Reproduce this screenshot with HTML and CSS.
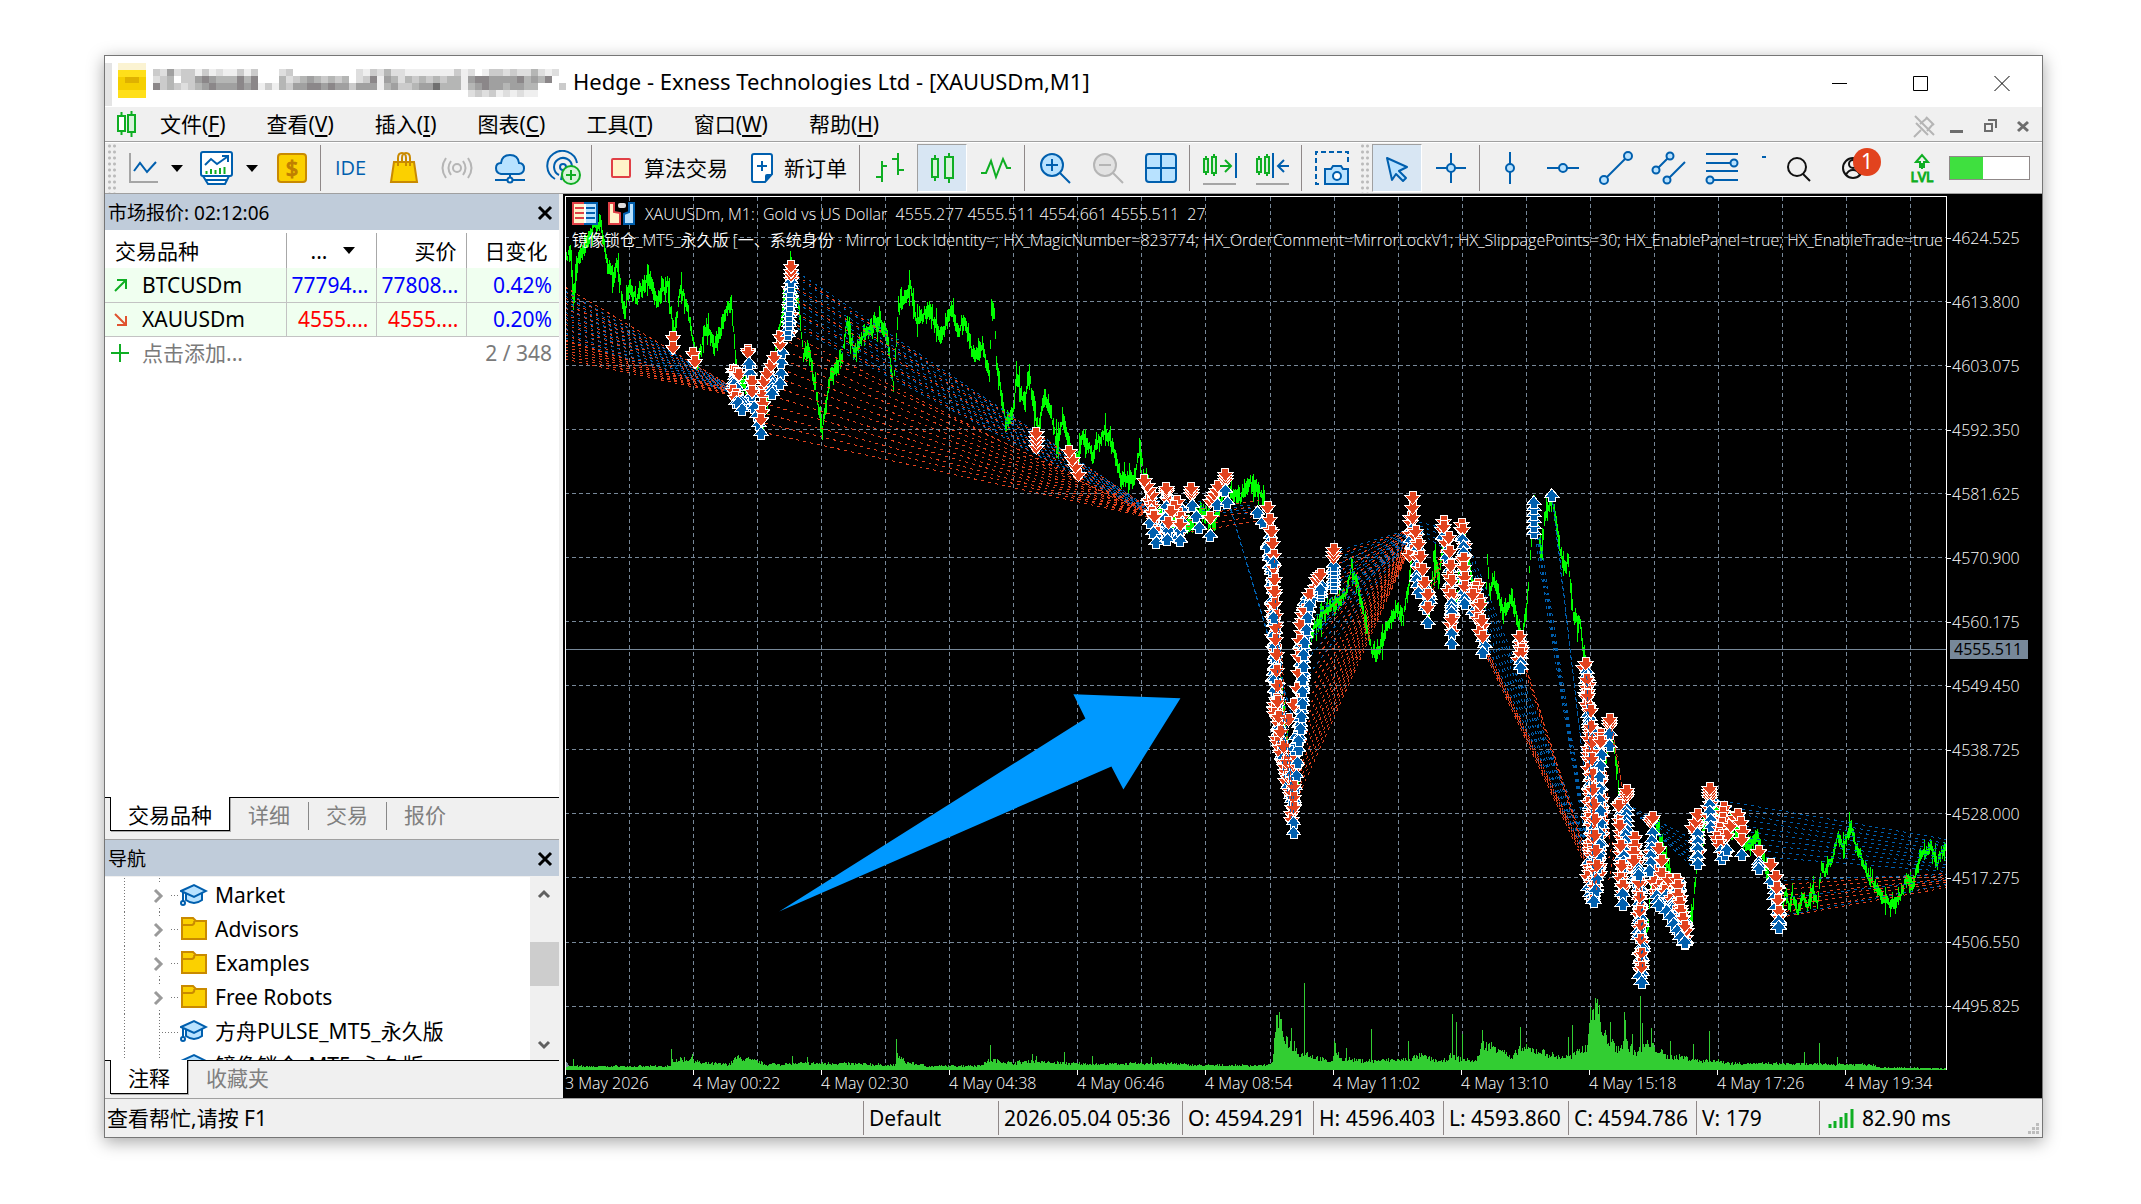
FILE: index.html
```html
<!DOCTYPE html>
<html lang="zh-CN">
<head>
<meta charset="utf-8">
<meta name="viewport" content="width=device-width, initial-scale=1">
<title>Hedge - Exness Technologies Ltd - [XAUUSDm,M1]</title>
<link rel="stylesheet" href="styles.css">
</head>
<body>
<div class="window">
  <header class="titlebar">
    <svg class="title-mask" id="mask" viewBox="0 0 464 50" aria-hidden="true"></svg>
    <h1 class="title">Hedge - Exness Technologies Ltd - [XAUUSDm,M1]</h1>
    <div class="win-controls">
      <button aria-label="最小化"><svg viewBox="0 0 20 20"><path d="M2 10.500H17"/></svg></button>
      <button aria-label="最大化"><svg viewBox="0 0 20 20"><path d="M2.500 3.500H16.500V17.500H2.500Z"/></svg></button>
      <button aria-label="关闭"><svg viewBox="0 0 20 20"><path d="M2.500 3L17.500 18M17.500 3L2.500 18"/></svg></button>
    </div>
  </header>

  <nav class="menubar">
    <svg class="menu-logo" viewBox="0 0 22 26"><g fill="none" stroke="#0fae23" stroke-width="2"><path d="M5.500 1V5M5.500 20V24M15.500 0V4M15.500 21V26"/><path fill="#fff" d="M2 5H9V20H2Z"/><path fill="#d7f3da" d="M12 4H19V21H12Z"/></g></svg>
    <button class="menu">文件(<u>F</u>)</button>
    <button class="menu">查看(<u>V</u>)</button>
    <button class="menu">插入(<u>I</u>)</button>
    <button class="menu">图表(<u>C</u>)</button>
    <button class="menu">工具(<u>T</u>)</button>
    <button class="menu">窗口(<u>W</u>)</button>
    <button class="menu">帮助(<u>H</u>)</button>
    <div class="mdi-controls">
      <button aria-label="取消固定"><svg viewBox="0 0 24 24"><g fill="none" stroke="#b5b5b5" stroke-width="2"><path d="M2 23L9 16M4 9L16 21M14 3L22 11M15 4L8 10M21 10L15 17M3 2L22 21"/></g></svg></button>
      <button aria-label="最小化"><svg viewBox="0 0 24 24"><path fill="#6d6d6d" d="M5 16H18V19H5Z"/></svg></button>
      <button aria-label="还原"><svg viewBox="0 0 24 24"><path fill="none" stroke="#6d6d6d" stroke-width="2" d="M7 10H14V17H7ZM10 6H18V14"/></svg></button>
      <button aria-label="关闭"><svg viewBox="0 0 24 24"><path fill="none" stroke="#6d6d6d" stroke-width="3" d="M7 8L17 17M17 8L7 17"/></svg></button>
    </div>
  </nav>

  <div class="toolbar">
    <span class="grip"></span>
    <button class="tool split" aria-label="线形图"><svg class="ico" viewBox="0 0 36 36"><path d="M4 3V32H32" fill="none" stroke="#a5a5a5" stroke-width="2"/><path d="M8 21L14 13L21 22L30 12" fill="none" stroke="#005fae" stroke-width="2"/></svg><i class="caret"></i></button>
    <button class="tool split" aria-label="指标"><svg class="ico" viewBox="0 0 36 36"><path d="M5 26L10 34H27L31 26" fill="#fff" stroke="#005fae" stroke-width="2"/><path d="M8 30H29" stroke="#005fae" stroke-width="2"/><rect x="3" y="2" width="31" height="24" rx="2" fill="#fff" stroke="#005fae" stroke-width="2"/><path d="M7 15L13 9L19 14L29 7M24 6H30V12" fill="none" stroke="#005fae" stroke-width="2"/><path d="M8.500 24V21M13 24V19M17.500 24V20M22 24V18M26.500 24V17" stroke="#0fae23" stroke-width="2"/></svg><i class="caret"></i></button>
    <button class="tool" aria-label="交易"><svg class="ico" viewBox="0 0 36 36"><rect x="4" y="4" width="28" height="28" rx="3" fill="#fbd000" stroke="#c98a00" stroke-width="2"/><text x="18" y="26" text-anchor="middle" class="dollar">$</text></svg></button>
    <span class="sep"></span>
    <button class="tool ide">IDE</button>
    <button class="tool" aria-label="市场"><svg class="ico" viewBox="0 0 36 36"><path d="M8 12H28L31 32H5Z" fill="#fbd000" stroke="#c98a00" stroke-width="2"/><path d="M12 16V8Q12 3 16 3Q20 3 20 8V16M16 12V8Q16 3 20 3Q24 3 24 8V16" fill="none" stroke="#c98a00" stroke-width="2"/></svg></button>
    <button class="tool" aria-label="信号"><svg class="ico" viewBox="0 0 36 36"><g fill="none" stroke="#b5b5b5" stroke-width="2"><circle cx="18" cy="18" r="4"/><path d="M12 11Q7 18 12 25M24 11Q29 18 24 25M7 8Q0 18 7 28M29 8Q36 18 29 28"/></g></svg></button>
    <button class="tool" aria-label="云主机"><svg class="ico" viewBox="0 0 36 36"><path d="M9 24Q4 23 4 18Q4 13 9 13Q10 5 18 5Q26 5 27 13Q32 13 32 18.500Q32 23 27 24Z" fill="#b8e2ff" stroke="#005fae" stroke-width="2"/><path d="M18 24V29M3 30H15M21 30H33" stroke="#005fae" stroke-width="2"/><circle cx="18" cy="30" r="2.500" fill="#fff" stroke="#005fae" stroke-width="2"/></svg></button>
    <button class="tool" aria-label="社区"><svg class="ico" viewBox="0 0 36 36"><g fill="none" stroke="#005fae" stroke-width="2"><circle cx="18" cy="17" r="3"/><path d="M14 25A9 9 0 1 1 27 16M10 29A15 15 0 1 1 32 13M18 20L16 30"/></g><circle cx="26" cy="25" r="9" fill="#d7f3da" stroke="#0fae23" stroke-width="2"/><path d="M21 25H31M26 20V30" stroke="#0fae23" stroke-width="2"/></svg></button>
    <span class="sep"></span>
    <button class="tool wide algo"><svg class="ico" viewBox="0 0 36 36"><rect x="9" y="9" width="18" height="18" rx="1" fill="#fff3c9" stroke="#e04046" stroke-width="2"/></svg>算法交易</button>
    <button class="tool wide order"><svg class="ico" viewBox="0 0 36 36"><path d="M10 4H26Q28 4 28 6V24L21 32H10Q8 32 8 30V6Q8 4 10 4Z" fill="#fff" stroke="#005fae" stroke-width="2"/><path d="M21 32V26Q21 24 23 24H28Z" fill="#005fae"/><path d="M13 16H23M18 11V21" stroke="#005fae" stroke-width="2"/></svg>新订单</button>
    <span class="sep"></span>
    <button class="tool" aria-label="柱状图"><svg class="ico" viewBox="0 0 36 36"><path d="M10 11V32M4 27H10M10 16H15M26 3V25M20 9H26M26 20H32" fill="none" stroke="#0fae23" stroke-width="2"/></svg></button>
    <button class="tool active" aria-label="蜡烛图"><svg class="ico" viewBox="0 0 36 36"><path d="M11 5V9M11 27V31M25 3V7M25 29V33M8 9H14V27H8ZM21 7H29V28H21Z" fill="#d7f3da" stroke="#0fae23" stroke-width="2"/></svg></button>
    <button class="tool" aria-label="折线图"><svg class="ico" viewBox="0 0 36 36"><path d="M3 23H8L13 11L18 27L25 9L29 18H33" fill="none" stroke="#0fae23" stroke-width="2"/></svg></button>
    <span class="sep"></span>
    <button class="tool" aria-label="放大"><svg class="ico" viewBox="0 0 36 36"><circle cx="15" cy="15" r="11" fill="#b8e2ff" stroke="#005fae" stroke-width="2"/><path d="M9 15H21M15 9V21M23 23L33 33" stroke="#005fae" stroke-width="2"/></svg></button>
    <button class="tool" aria-label="缩小"><svg class="ico" viewBox="0 0 36 36"><circle cx="15" cy="15" r="11" fill="#e2e2e2" stroke="#b5b5b5" stroke-width="2"/><path d="M9 15H21M23 23L33 33" stroke="#b5b5b5" stroke-width="2"/></svg></button>
    <button class="tool" aria-label="平铺"><svg class="ico" viewBox="0 0 36 36"><rect x="3" y="4" width="30" height="28" rx="3" fill="#b8e2ff" stroke="#005fae" stroke-width="2"/><path d="M18 4V32M3 18H33" stroke="#005fae" stroke-width="2"/></svg></button>
    <span class="sep"></span>
    <button class="tool" aria-label="自动滚动"><svg class="ico" viewBox="0 0 36 36"><path d="M4 6V9M4 22V25M12 4V7M12 23V26M2 9H6V22H2ZM10 7H14V23H10Z" fill="#d7f3da" stroke="#0fae23" stroke-width="2"/><path d="M18 16H29M23 10L29 16L23 22" fill="none" stroke="#0fae23" stroke-width="2"/><path d="M34 3V28" stroke="#005fae" stroke-width="2"/><path d="M1 34H34" stroke="#a5a5a5" stroke-width="2"/></svg></button>
    <button class="tool" aria-label="图表平移"><svg class="ico" viewBox="0 0 36 36"><path d="M4 6V9M4 22V25M12 4V7M12 23V26M2 9H6V22H2ZM10 7H14V23H10Z" fill="#d7f3da" stroke="#0fae23" stroke-width="2"/><path d="M18 3V28M23 16H34M29 10L23 16L29 22" fill="none" stroke="#005fae" stroke-width="2"/><path d="M1 34H34" stroke="#a5a5a5" stroke-width="2"/></svg></button>
    <span class="sep"></span>
    <button class="tool" aria-label="截图"><svg class="ico" viewBox="0 0 36 36"><path d="M34 12V2H2V34H8" fill="none" stroke="#005fae" stroke-width="2" stroke-dasharray="5 3"/><path d="M12 19H17L19 16H27L29 19H34V34H11V19Z" fill="#b8e2ff" stroke="#005fae" stroke-width="2"/><circle cx="23" cy="26" r="4" fill="#fff" stroke="#005fae" stroke-width="2"/></svg></button>
    <span class="grip"></span>
    <button class="tool active" aria-label="光标"><svg class="ico" viewBox="0 0 36 36"><path d="M8 8L28 17L20 21L27 28L24 31L17 24L13 30Z" fill="#b8e2ff" stroke="#005fae" stroke-width="2" stroke-linejoin="round"/></svg></button>
    <button class="tool" aria-label="十字线"><svg class="ico" viewBox="0 0 36 36"><path d="M18 3V33M3 18H33" stroke="#005fae" stroke-width="2"/><circle cx="18" cy="18" r="4" fill="#b8e2ff" stroke="#005fae" stroke-width="2"/></svg></button>
    <span class="sep"></span>
    <button class="tool" aria-label="垂直线"><svg class="ico" viewBox="0 0 36 36"><path d="M18 2V34" stroke="#005fae" stroke-width="2"/><circle cx="18" cy="18" r="4" fill="#b8e2ff" stroke="#005fae" stroke-width="2"/></svg></button>
    <button class="tool" aria-label="水平线"><svg class="ico" viewBox="0 0 36 36"><path d="M2 18H34" stroke="#005fae" stroke-width="2"/><circle cx="18" cy="18" r="4" fill="#b8e2ff" stroke="#005fae" stroke-width="2"/></svg></button>
    <button class="tool" aria-label="趋势线"><svg class="ico" viewBox="0 0 36 36"><path d="M6 30L30 6" stroke="#005fae" stroke-width="2"/><g fill="#b8e2ff" stroke="#005fae" stroke-width="2"><circle cx="6" cy="30" r="4"/><circle cx="30" cy="6" r="4"/></g></svg></button>
    <button class="tool" aria-label="通道"><svg class="ico" viewBox="0 0 36 36"><path d="M5 20L19 6M16 30L34 12" stroke="#005fae" stroke-width="2"/><g fill="#b8e2ff" stroke="#005fae" stroke-width="2"><circle cx="5" cy="20" r="3.500"/><circle cx="19" cy="6" r="3.500"/><circle cx="16" cy="30" r="3.500"/></g></svg></button>
    <button class="tool" aria-label="斐波那契"><svg class="ico" viewBox="0 0 36 36"><path d="M2 4H34M2 13H34M2 21H34M2 30H34" stroke="#005fae" stroke-width="2"/><g fill="#b8e2ff" stroke="#005fae" stroke-width="2"><circle cx="30" cy="13" r="3.500"/><circle cx="6" cy="30" r="3.500"/></g></svg></button>
    <span class="more"></span>
    <button class="tool push" aria-label="搜索"><svg class="ico" viewBox="0 0 36 36"><circle cx="17" cy="17" r="9" fill="none" stroke="#111" stroke-width="2"/><path d="M23 24L30 31" stroke="#111" stroke-width="2"/></svg></button>
    <button class="tool user" aria-label="账户"><svg class="ico" viewBox="0 0 36 36"><g fill="none" stroke="#111" stroke-width="2"><circle cx="20" cy="18" r="10"/><circle cx="20" cy="14" r="4"/><path d="M13 25Q15 20 20 20Q25 20 27 25"/></g></svg><b class="badge">1</b></button>
    <button class="tool lvl" aria-label="LVL"><svg class="ico" viewBox="0 0 36 36"><path d="M18 19V13M12 12L18 5L24 12H20V17H16V12Z" fill="none" stroke="#0fae23" stroke-width="2"/><text x="18" y="32" text-anchor="middle" class="lvl-text">LVL</text></svg></button>
    <span class="meter"><i></i></span>
  </div>

  <main class="work">
    <aside class="side">
      <section class="panel market">
        <h2 class="panel-head">市场报价: 02:12:06<button class="close" aria-label="关闭"><svg viewBox="0 0 16 16"><path d="M2 2L14 14M14 2L2 14"/></svg></button></h2>
        <table class="quotes">
          <colgroup><col class="c-sym"><col class="c-num"><col class="c-num"><col class="c-chg"></colgroup>
          <thead><tr><th>交易品种</th><th class="sorted">...<i class="caret"></i></th><th class="r">买价</th><th class="mid">日变化</th></tr></thead>
          <tbody>
            <tr><td><span class="sym"><svg viewBox="0 0 16 16"><path d="M2 14L13 3M4 3H13V12" stroke="#0fae23"/></svg>BTCUSDm</span></td><td class="r up">77794...</td><td class="r up">77808...</td><td class="r up">0.42%</td></tr>
            <tr><td><span class="sym"><svg viewBox="0 0 16 16"><path d="M2 3L13 14M13 5V14H4" stroke="#e0532f"/></svg>XAUUSDm</span></td><td class="r down">4555....</td><td class="r down">4555....</td><td class="r up">0.20%</td></tr>
          </tbody>
          <tfoot><tr><td colspan="2"><span class="sym add"><svg viewBox="0 0 18 18"><path d="M0 9H18M9 0V18" stroke="#0fae23"/></svg>点击添加...</span></td><td colspan="2" class="r count">2 / 348</td></tr></tfoot>
        </table>
        <div class="tabs"><button class="tab on">交易品种</button><button class="tab">详细</button><button class="tab">交易</button><button class="tab">报价</button></div>
      </section>
      <section class="panel navigator">
        <h2 class="panel-head">导航<button class="close" aria-label="关闭"><svg viewBox="0 0 16 16"><path d="M2 2L14 14M14 2L2 14"/></svg></button></h2>
        <div class="tree-box">
          <ul class="tree">
            <li class="node"><svg class="twig" viewBox="0 0 64 34"><use href="#branch"/></svg><svg class="leaf" viewBox="0 0 28 26"><use href="#cap"/></svg>Market</li>
            <li class="node"><svg class="twig" viewBox="0 0 64 34"><use href="#branch"/></svg><svg class="leaf" viewBox="0 0 28 26"><use href="#folder"/></svg>Advisors</li>
            <li class="node"><svg class="twig" viewBox="0 0 64 34"><use href="#branch"/></svg><svg class="leaf" viewBox="0 0 28 26"><use href="#folder"/></svg>Examples</li>
            <li class="node"><svg class="twig" viewBox="0 0 64 34"><use href="#branch"/></svg><svg class="leaf" viewBox="0 0 28 26"><use href="#folder"/></svg>Free Robots</li>
            <li class="node"><svg class="twig" viewBox="0 0 64 34"><use href="#stem"/></svg><svg class="leaf" viewBox="0 0 28 26"><use href="#cap"/></svg>方舟PULSE_MT5_永久版</li>
            <li class="node"><svg class="twig" viewBox="0 0 64 34"><use href="#stem"/></svg><svg class="leaf" viewBox="0 0 28 26"><use href="#cap"/></svg>镜像锁仓_MT5_永久版</li>
          </ul>
          <div class="scroll"><svg viewBox="0 0 28 32"><path d="M9 20L14 15L19 20"/></svg><i class="thumb"></i><svg class="end" viewBox="0 0 28 32"><path d="M9 14L14 19L19 14"/></svg></div>
        </div>
        <div class="tabs"><button class="tab on">注释</button><button class="tab">收藏夹</button></div>
      </section>
    </aside>

    <section class="chart">
      <div class="plot">
        <svg class="canvas" id="canvas" viewBox="563 194 1383 876" preserveAspectRatio="xMinYMin slice" role="img" aria-label="XAUUSDm M1"></svg>
        <div class="legend">
          <p class="legend-row">
            <svg viewBox="0 0 64 24"><path d="M1 1H13V22H1Z" fill="#fff3c9" stroke="#e04046" stroke-width="2"/><path d="M13 1H25V22H13Z" fill="#b8e2ff" stroke="#005fae" stroke-width="2"/><path d="M3 6H12M3 11H12M3 16H12" stroke="#e04046" stroke-width="2"/><path d="M14 6H23M14 11H23M14 16H23" stroke="#005fae" stroke-width="2"/><path d="M13 2V21" stroke="#fff" stroke-width="2"/><path d="M37 1H42V10L48 11V22H37Z" fill="#fff3c9" stroke="#e04046" stroke-width="2"/><path d="M62 1H57V10L52 12V22H62Z" fill="#b8e2ff" stroke="#005fae" stroke-width="2"/><rect x="46" y="1" width="8" height="5" rx="2" fill="#ddd"/></svg>
            <span>XAUUSDm, M1:&nbsp; Gold vs US Dollar&nbsp; 4555.277 4555.511 4554.661 4555.511&nbsp; 27</span>
          </p>
          <p class="legend-row params">镜像锁仓_MT5_永久版 [一、系统身份 · Mirror Lock Identity=; HX_MagicNumber=823774; HX_OrderComment=MirrorLockV1; HX_SlippagePoints=30; HX_EnablePanel=true; HX_EnableTrade=true</p>
        </div>
      </div>
      <div class="prices">
        <span>4624.525</span><span>4613.800</span><span>4603.075</span><span>4592.350</span><span>4581.625</span><span>4570.900</span><span>4560.175</span><span>4549.450</span><span>4538.725</span><span>4528.000</span><span>4517.275</span><span>4506.550</span><span>4495.825</span>
        <b class="last">4555.511</b>
      </div>
      <div class="times">
        <span>3 May 2026</span><span>4 May 00:22</span><span>4 May 02:30</span><span>4 May 04:38</span><span>4 May 06:46</span><span>4 May 08:54</span><span>4 May 11:02</span><span>4 May 13:10</span><span>4 May 15:18</span><span>4 May 17:26</span><span>4 May 19:34</span>
      </div>
    </section>
  </main>

  <footer class="status">
    <span>查看帮忙,请按 F1</span><span>Default</span><span>2026.05.04 05:36</span><span>O: 4594.291</span><span>H: 4596.403</span><span>L: 4593.860</span><span>C: 4594.786</span><span>V: 179</span>
    <span class="ping"><svg viewBox="0 0 26 20"><path d="M2 20V16M7 20V13M13 20V9M18 20V5M24 20V1" stroke="#0fae23" stroke-width="3"/></svg>82.90 ms</span>
    <svg class="size-grip" viewBox="0 0 12 12"><path fill="#bdbdbd" d="M8 0H11V3H8ZM4 4H7V7H4ZM8 4H11V7H8ZM0 8H3V11H0ZM4 8H7V11H4ZM8 8H11V11H8Z"/></svg>
  </footer>
</div>

<svg class="defs" aria-hidden="true">
  <g id="branch"><path d="M19.500 0V34M54.500 0V6M54.500 30V34M66 17.500H74" fill="none" stroke="#777" stroke-dasharray="1 2"/><path d="M50 12L56 18L50 24" fill="none" stroke="#9a9a9a" stroke-width="3"/></g>
  <g id="stem"><path d="M19.500 0V34M54.500 0V34M54 18.500H74" fill="none" stroke="#777" stroke-dasharray="1 2"/></g>
  <g id="cap" stroke="#005fae" stroke-width="2"><path d="M6 11V18Q14 24 22 18V11" fill="#b8e2ff"/><path d="M1 9L14 3L26 9L14 15Z" fill="#b8e2ff"/><path d="M3 10V19"/><circle cx="3" cy="21" r="2" fill="#fff"/></g>
  <g id="folder" fill="#fbd000" stroke="#c98a00" stroke-width="2"><path d="M2 2H13L16 5H26V23H2Z"/><path d="M2 9H12Q15 8 14 5"/></g>
</svg>
<script src="chart.js"></script>
</body>
</html>
```
FILE: styles.css
```css
* { box-sizing: border-box; margin: 0; padding: 0; }
body {
  background: #fff; color: #000; padding: 55px 98px 66px 104px;
  font: 21px/26px "Noto Sans", "Noto Sans CJK SC", sans-serif;
}
button { border: 0; background: none; font: inherit; color: inherit; }
.defs { position: absolute; width: 0; height: 0; }

.window {
  display: flex; flex-direction: column; min-height: calc(100vh - 121px);
  border: 1px solid #767676; background: #f0f0f0;
  box-shadow: 0 4px 16px rgba(0, 0, 0, .35);
}

.titlebar { display: flex; align-items: center; height: 51px; padding-bottom: 1px; background: #fff; }
.title-mask { width: 464px; height: 50px; flex: none; }
.title { flex: 1; padding-left: 4px; font-size: 22px; font-weight: 400; white-space: nowrap; }
.win-controls { display: flex; }
.win-controls button { width: 81px; height: 50px; }
.win-controls svg { width: 20px; height: 20px; fill: none; stroke: #000; vertical-align: middle; }

.menubar { display: flex; align-items: center; height: 35px; border-bottom: 1px solid #a0a0a0; padding-left: 11px; }
.menu-logo { width: 22px; height: 26px; margin-right: 22px; }
.menu { margin-right: 41px; white-space: nowrap; }
.menu u { text-underline-offset: 3px; }
.mdi-controls { display: flex; margin-left: auto; padding-right: 3px; }
.mdi-controls button { width: 33px; height: 32px; }
.mdi-controls svg { width: 24px; height: 24px; vertical-align: middle; }

.toolbar { display: flex; align-items: center; height: 52px; padding-right: 12px; border-top: 1px solid #fff; border-bottom: 1px solid #a0a0a0; }
.tool { position: relative; display: flex; align-items: center; justify-content: center; width: 53px; height: 48px; flex: none; }
.tool.active { background: #d8e6f3; border: 1px solid; border-color: #a0a0a0 #fff #fff #a0a0a0; width: 50px; margin: 0 2px 0 1px; }
.tool.split { width: 72px; justify-content: flex-start; padding-left: 8px; gap: 9px; }
.tool.split + .split { width: 75px; gap: 12px; }
.tool.algo { width: 139px; justify-content: flex-start; padding-left: 8px; gap: 5px; }
.tool.order { width: 123px; justify-content: flex-start; padding-left: 10px; gap: 4px; }
.ico { width: 36px; height: 36px; flex: none; }
.tool.ide { color: #005fae; font-family: "Open Sans", "Noto Sans", sans-serif; font-size: 20px; }
.dollar { font: 22px "Noto Sans", sans-serif; fill: #c07f00; stroke: #c07f00; }
.lvl-text { font: 14px "Noto Sans", sans-serif; fill: #0fae23; stroke: #0fae23; }
.caret { border: 6px solid transparent; border-top: 7px solid #000; border-bottom: 0; }
.sep { width: 1px; height: 46px; margin: 0 3px 0 2px; background: #8f8888; flex: none; }
.grip { width: 9px; height: 50px; margin: 0 2px; flex: none; background: radial-gradient(circle, #bbb 1px, transparent 2px) 0 0 / 5px 6px; }
.more { width: 4px; height: 2px; margin: 0 0 22px 14px; background: #005fae; }
.push { margin-left: auto; }
.user { margin-right: 18px; }
.badge { position: absolute; left: 29px; top: 4px; width: 28px; height: 28px; border-radius: 14px; background: #e2431e; color: #fff; font-weight: 400; line-height: 27px; text-align: center; }
.meter { width: 81px; height: 24px; margin-left: 1px; border: 1px solid #8f8888; background: #fff; }
.meter i { display: block; width: 42%; height: 100%; background: #3fe03f; }

.work { display: grid; grid-template-columns: 454px minmax(0, 1fr); column-gap: 4px; flex: 1; min-height: 0; }
.side { display: flex; flex-direction: column; min-height: 0; }
.market { display: flex; flex-direction: column; flex: 1; background: #fff; }
.panel-head { display: flex; align-items: center; justify-content: space-between; height: 36px; padding: 2px 6px 0 3px; background: #c0ccda; font-size: 19px; font-weight: 400; }
.close svg { width: 16px; height: 16px; fill: none; stroke: #000; stroke-width: 3; display: block; }

.quotes { width: 100%; margin-top: 3px; table-layout: fixed; border-collapse: collapse; background: #fff; }
.c-sym { width: 181px; } .c-num { width: 90px; } .c-chg { width: 93px; }
.quotes th { height: 35px; padding-left: 10px; font-weight: 400; text-align: left; }
.quotes th + th { border-left: 1px solid #a8a8a8; }
.quotes td { height: 34px; }
.quotes tbody td { background: #f0fff0; border-bottom: 1px solid #c3c3c3; }
.quotes tbody td + td { border-left: 1px solid #c3c3c3; }
.quotes .sorted { padding-left: 24px; }
.sorted .caret { display: inline-block; margin: 0 0 5px 16px; }
.quotes .r { text-align: right; padding-right: 7px; }
.quotes th.r { padding-right: 9px; }
.quotes th.mid { padding: 0 0 0 18px; }
.up { color: #00f; } .down { color: #f00; }
.sym { display: flex; align-items: center; gap: 13px; padding-left: 8px; }
.sym svg { width: 16px; height: 16px; fill: none; stroke-width: 2; }
.sym.add { gap: 13px; padding-left: 6px; color: #7a7a7a; }
.sym.add svg { width: 18px; height: 18px; }
.quotes .count { color: #7a7a7a; }
.market .tabs { margin-top: auto; height: 42px; }

.tabs { display: flex; align-items: flex-start; padding-left: 5px; border-top: 1px solid #000; background: #f0f0f0; height: 38px; color: #808080; }
.tab { position: relative; height: 32px; padding: 2px 18px 0; line-height: 30px; }
.tab.on { margin-top: -1px; height: 34px; padding: 3px 17px 0; color: #000; background: #fff; border: 1px solid #000; border-top: 0; box-shadow: 1px 1px 0 #aaa; }
.tab:not(.on) + .tab { background: linear-gradient(#888, #888) 0 4px / 1px 28px no-repeat; }

.navigator .panel-head { border-top: 1px solid #a0a0a0; height: 37px; }
.tree-box { display: flex; height: 183px; margin-top: 1px; background: #fff; overflow: hidden; }
.tree { flex: 1; padding-top: 1px; list-style: none; }
.node { display: flex; align-items: center; height: 34px; white-space: nowrap; }
.twig { width: 64px; height: 34px; overflow: visible; margin-right: 11px; }
.leaf { width: 28px; height: 26px; margin-right: 7px; }
.scroll { display: flex; flex-direction: column; width: 29px; background: #f0f0f0; }
.scroll svg { width: 28px; height: 32px; fill: none; stroke: #606060; stroke-width: 3; }
.scroll .end { margin-top: auto; }
.thumb { height: 44px; margin-top: 33px; background: #cdcdcd; }

.chart { display: grid; grid-template: minmax(0, 1fr) 28px / minmax(0, 1fr) 95px; background: #000; color: #fff; font-family: "Open Sans", "Noto Sans", "Noto Sans CJK SC", sans-serif; font-size: 16px; font-weight: 350; line-height: 24px; }
.plot { position: relative; overflow: hidden; }
.canvas { position: absolute; inset: 0; width: 100%; height: 100%; }
.legend { position: absolute; inset: 7px 0 auto 9px; }
.legend-row { display: flex; align-items: center; gap: 9px; height: 26px; white-space: nowrap; overflow: hidden; }
.legend-row svg { width: 64px; height: 24px; flex: none; }
.prices { position: relative; padding-top: 12px; }
.prices span { display: flex; align-items: center; height: 64px; gap: 1px; }
.prices span::before { content: ""; width: 4px; height: 1px; background: #fff; }
.prices .last { position: absolute; left: 3px; top: 446px; width: 78px; height: 19px; padding-left: 4px; line-height: 19px; background: #778899; color: #000; font-weight: 400; }
.times { grid-column: 1 / -1; display: grid; grid-template-columns: repeat(11, 128px); padding-left: 2px; overflow: hidden; }
.times span { background: linear-gradient(#fff, #fff) 0 0 / 1px 5px no-repeat; padding-top: 1px; white-space: nowrap; }

.status { position: relative; display: grid; grid-template-columns: minmax(0, 1fr) 135px 184px 131px 130px 125px 128px 123px 223px; align-items: center; height: 39px; border-top: 1px solid #a0a0a0; white-space: nowrap; }
.status span { height: 34px; line-height: 34px; padding-left: 5px; border-left: 1px solid #8f8888; }
.status span:first-child { border: 0; padding-left: 2px; }
.status .ping { display: flex; align-items: center; gap: 8px; padding-left: 8px; }
.ping svg { width: 26px; height: 20px; }
.size-grip { position: absolute; right: 2px; bottom: 2px; width: 12px; height: 12px; }
```
FILE: chart.js
```js
const RED = '#e2431e', BLUE = '#005fae';
let seed = 7;
const rnd = () => (seed = (seed * 16807) % 2147483647) / 2147483647;

function at(points, t) {
  let total = 0;
  const len = [];
  for (let i = 1; i < points.length; i++) {
    const l = Math.hypot(points[i][0] - points[i - 1][0], points[i][1] - points[i - 1][1]);
    len.push(l); total += l;
  }
  let d = t * total;
  for (let i = 0; i < len.length; i++) {
    if (d <= len[i] || i === len.length - 1) {
      const k = len[i] ? d / len[i] : 0;
      return [points[i][0] + (points[i + 1][0] - points[i][0]) * k, points[i][1] + (points[i + 1][1] - points[i][1]) * k];
    }
    d -= len[i];
  }
  return points[0];
}
const parse = s => s.trim().split(/\s+/).map(p => p.split(',').map(Number));
function valueAt(points, x) {
  for (let i = 1; i < points.length; i++) {
    if (x <= points[i][0]) {
      const [a, b] = [points[i - 1], points[i]];
      return a[1] + (b[1] - a[1]) * (x - a[0]) / (b[0] - a[0]);
    }
  }
  return points[points.length - 1][1];
}

// Grid
let out = '<defs><path id="dn" d="M-3.500 -6.500H3.500V-2.500H7.500L0 6.500L-7.500 -2.500H-3.500Z" fill="' + RED + '" stroke="#fff"/>' +
  '<path id="upw" d="M-3.500 6.500H3.500V2.500H7.500L0 -6.500L-7.500 2.500H-3.500Z" fill="' + BLUE + '" stroke="#fff"/></defs>';
let grid = '';
for (let y = 237.5; y < 1069; y += 64) grid += `M565 ${y}H1946`;
for (let x = 629.5; x < 1946; x += 64) grid += `M${x} 197V1069`;
out += `<path d="${grid}" stroke="#778899" stroke-dasharray="4 3" fill="none"/>`;

// Volume
const volume = parse(`566,3 575,3 660,3 670,3 671,9 692,10 700,6 730,5 735,11 755,8 765,5 830,6 895,4 897,14 905,7 930,3 980,4 990,9 1000,8
  1010,6 1030,8 1060,6 1100,5 1160,6 1200,4 1268,4 1272,12 1275,52 1283,32 1290,22 1300,14 1304,16 1312,12 1325,8 1331,8 1333,22 1340,10 1365,8
  1390,9 1405,9 1420,13 1440,7 1450,13 1458,10 1475,8 1481,24 1500,20 1510,9 1518,20 1540,17 1555,12 1570,12 1585,22 1590,55 1596,66 1600,36
  1615,20 1625,25 1635,15 1645,24 1655,20 1665,12 1680,12 1700,8 1710,9 1730,6 1800,5 1870,5 1880,2 1946,1`);
const spikes = parse(`573,11 671,21 692,16 738,15 748,13 792,14 807,13 896,31 990,25 1032,16 1036,14 1064,18 1092,14 1151,13 1275,55 1290,42 1293,29
  1303,87 1345,22 1370,41 1407,29 1451,56 1455,48 1461,36 1481,40 1519,43 1567,33 1571,45 1587,36 1594,72 1596,71 1609,48 1623,58 1624,50 1631,36
  1639,74 1641,47 1650,42 1669,29 1692,26 1708,39 1803,18 1818,27 1836,13`);
let vol = '';
for (let x = 566; x < 1946; x++) {
  const spike = spikes.find(s => s[0] === x);
  const h = spike ? spike[1] : valueAt(volume, x) * (0.8 + rnd() * 0.5) + rnd();
  vol += `M${x + 0.5} 1069V${Math.round(1069 - h)}`;
}
out += `<path d="M565 1060L573 1069H565Z" fill="#778899"/><path d="${vol}" stroke="#32cd32"/>`;

// Price
const price = parse(`566,257 570,253 573,300 578,260 589,237 593,222 601,227 605,257 613,280 617,263 624,313 629,287 636,298 648,277 656,300
  667,285 674,337 680,287 687,307 697,363 706,327 715,347 721,323 731,303 736,370 762,423 791,263 799,313 803,357 807,347 813,377 822,432 829,380
  842,357 846,323 854,353 864,333 880,320 887,337 893,387 898,307 905,300 910,285 916,323 929,310 940,337 950,310 958,330 964,323 974,357 982,347
  989,373 991,310 994,310 996,363 1005,423 1013,410 1016,377 1023,400 1029,377 1038,433 1044,397 1050,410 1057,447 1062,417 1074,467 1082,437
  1093,453 1105,430 1113,450 1121,480 1133,480 1139,447 1144,477 1153,513 1187,527 1203,510 1213,523 1225,487 1240,497 1250,480 1263,500 1270,540
  1275,623 1293,827 1300,723 1307,640 1317,620 1327,607 1338,600 1345,590 1350,567 1357,590 1363,617 1371,653 1378,650 1383,630 1395,610 1402,617
  1407,587 1412,540 1413,523 1428,617 1432,560 1438,577 1443,527 1452,637 1462,527 1482,647 1486,563 1488,590 1493,580 1502,613 1511,597 1515,620
  1520,637 1525,613 1528,573 1533,497 1540,553 1543,517 1551,500 1555,527 1562,570 1567,563 1572,613 1578,623 1584,661 1592,870 1609,722 1616,772
  1623,880 1626,797 1641,975 1647,919 1653,819 1684,930 1691,911 1695,869 1709,794 1724,833 1735,826 1747,847 1755,836 1760,851 1778,919 1784,894
  1788,904 1791,894 1796,911 1802,894 1806,904 1812,890 1816,904 1820,865 1823,872 1831,858 1836,836 1841,847 1845,840 1849,822 1854,844 1861,861
  1868,879 1875,888 1882,897 1891,904 1898,897 1905,879 1912,883 1919,854 1924,854 1930,844 1936,865 1940,851 1946,849`);
let bars = '';
for (let x = 566; x < 1946; x++) {
  const a = x < 1760 ? 12 : 8;
  const y = valueAt(price, x) + (rnd() - 0.5) * a * 0.5;
  const r = rnd() < 0.15 ? 1.6 : 0.7;
  bars += `M${x + 0.5} ${Math.round(y - 2 - rnd() * a * r)}V${Math.round(y + 2 + rnd() * a * r)}`;
}
out += `<path d="${bars}" stroke="#0f0"/><path d="M565 649.500H1946" stroke="#778899"/>`;

// Trade links: colour, start line, end line, count
const fans = [
  [RED, '565,287 565,340', '736,389 736,393', 11], [BLUE, '565,291 565,338', '736,390 736,394', 10], [RED, '565,341 565,359', '736,392 736,396', 7],
  [BLUE, '791,268 791,325', '1152,510 1152,516', 10], [RED, '791,272 791,335', '1152,510 1152,517', 6], [RED, '789,342 762,432', '1152,512 1152,518', 11],
  [BLUE, '1333,552 1310,640', '1413,528 1413,534', 12], [RED, '1333,556 1296,800', '1414,528 1414,538', 26], [BLUE, '1310,600 1304,680', '1412,532 1412,534', 5],
  [BLUE, '1464,535 1482,645', '1590,850 1592,872', 9], [RED, '1482,640 1484,652', '1588,862 1590,876', 5], [RED, '1520,650 1521,660', '1594,880 1594,884', 3],
  [BLUE, '1533,530 1538,530', '1588,860 1592,870', 4], [BLUE, '1551,495 1552,497', '1592,840 1592,844', 2], [BLUE, '1225,490 1226,495', '1293,720 1293,722', 2],
  [BLUE, '1412,520 1415,530', '1450,530 1462,560', 4], [RED, '1427,600 1427,610', '1443,540 1446,545', 3],
  [BLUE, '1156,497 1160,507', '1262,507 1264,515', 4], [RED, '1152,515 1170,535', '1262,500 1262,520', 5],
  [BLUE, '1709,798 1758,856', '1946,839 1946,871', 10], [RED, '1770,885 1779,917', '1946,873 1946,887', 7], [BLUE, '1776,880 1778,916', '1946,874 1946,884', 3],
  [BLUE, '1626,804 1652,830', '1694,840 1696,870', 7], [RED, '1606,750 1608,880', '1594,890 1624,800', 7]
];
const link = f => {
  const [c, s, e, n] = f;
  const a = parse(s), b = parse(e);
  let d = '';
  for (let i = 0; i < n; i++) {
    const p = at(a, i / (n - 1)), q = at(b, i / (n - 1));
    d += `M${p.map(Math.round)}L${q.map(Math.round)}`;
  }
  return `<path d="${d}" stroke="${c}" fill="none" stroke-dasharray="3 4"/>`;
};
out += fans.map(link).join('');

// Trade arrows: u = buy, d = sell, m = both
const arrows = [
  ['d', 2, '673,338 673,348'], ['d', 2, '693,354 695,362'],
  ['m', 10, '734,370 736,402'], ['u', 5, '748,400 738,402'], ['d', 4, '733,371 739,375'], ['u', 5, '749,366 752,395'], ['u', 2, '742,409 754,407'], ['d', 2, '748,351 748,353'],
  ['u', 1, '749,363 749,363'], ['d', 2, '752,382 752,392'], ['u', 3, '757,415 761,433'], ['d', 5, '764,388 761,420'],
  ['u', 4, '772,380 772,393'], ['u', 4, '780,383 782,352'], ['d', 4, '764,382 774,358'], ['u', 1, '772,393 772,393'], ['u', 1, '780,383 780,383'],
  ['m', 7, '789,333 791,280'], ['d', 2, '780,345 780,337'], ['u', 12, '788,334 791,281'], ['d', 3, '791,276 791,267'],
  ['d', 4, '1036,448 1036,434'], ['d', 4, '1078,475 1069,452'],
  ['m', 14, '1150,498 1158,536'], ['m', 8, '1166,495 1168,535'], ['m', 8, '1180,510 1180,537'], ['u', 3, '1150,522 1156,542'], ['u', 2, '1168,530 1167,539'], ['u', 2, '1180,530 1180,540'],
  ['d', 4, '1152,495 1144,481'], ['d', 3, '1166,493 1166,489'], ['d', 3, '1177,502 1171,512'], ['d', 2, '1168,523 1180,525'], ['d', 2, '1154,517 1154,517'],
  ['d', 3, '1191,495 1191,489'], ['u', 3, '1192,505 1199,527'], ['d', 1, '1210,518 1210,518'], ['u', 1, '1210,535 1210,535'], ['d', 5, '1210,502 1218,487'],
  ['u', 1, '1217,504 1217,504'], ['d', 3, '1225,481 1225,475'], ['u', 2, '1225,490 1227,502'], ['u', 1, '1257,512 1257,512'], ['u', 2, '1262,522 1267,545'],
  ['m', 50, '1268,530 1273,600 1274,690 1280,750 1291,790 1293,820'], ['u', 14, '1267,547 1273,580 1274,690'], ['m', 22, '1275,700 1278,745 1291,800'], ['d', 12, '1267,508 1272,539 1274,590 1275,640'],
  ['d', 12, '1275,640 1278,720 1288,775 1293,808'], ['u', 2, '1273,562 1273,617'],
  ['m', 34, '1292,780 1300,700 1303,610 1310,590 1320,585'], ['u', 18, '1294,800 1301,717 1304,640 1309,600 1320,589'], ['d', 10, '1288,720 1297,690 1300,620 1307,600 1316,580'], ['u', 12, '1298,740 1301,717 1304,640 1309,605'], ['d', 2, '1318,577 1320,575'],
  ['u', 7, '1333,587 1333,565'], ['d', 3, '1333,558 1333,550'], ['u', 3, '1320,595 1320,589'], ['d', 3, '1293,787 1293,808'], ['u', 2, '1293,822 1293,832'],
  ['m', 8, '1411,518 1410,556'], ['d', 3, '1412,518 1412,498'], ['m', 12, '1415,532 1418,590'], ['m', 6, '1427,590 1427,608'], ['u', 2, '1418,592 1427,622'], ['d', 7, '1415,532 1419,552 1423,577 1427,593 1427,608'],
  ['m', 16, '1441,530 1450,570 1451,632'], ['d', 2, '1443,522 1443,527'], ['d', 5, '1448,538 1451,577 1451,595'], ['u', 3, '1451,603 1451,612'], ['d', 1, '1451,620 1451,620'], ['u', 2, '1451,633 1451,643'],
  ['m', 10, '1462,530 1464,600'], ['d', 2, '1461,525 1462,530'], ['u', 3, '1462,539 1463,552'], ['d', 4, '1463,559 1464,587'], ['u', 2, '1464,598 1464,603'], ['u', 1, '1472,612 1472,612'],
  ['m', 8, '1477,600 1482,645'], ['d', 4, '1477,585 1472,595'], ['d', 3, '1480,605 1482,637'], ['u', 1, '1482,652 1482,652'],
  ['m', 6, '1519,640 1520,660'], ['d', 1, '1519,637 1519,637'], ['d', 2, '1521,650 1520,654'], ['u', 2, '1520,662 1520,667'],
  ['u', 6, '1533,532 1533,502'], ['u', 1, '1551,495 1551,495'],
  ['m', 70, '1585,668 1589,740 1590,820 1589,880 1592,900'], ['m', 40, '1594,730 1600,800 1598,870 1592,900'], ['d', 14, '1585,664 1586,690 1590,711 1591,744 1592,800 1594,870'], ['d', 3, '1600,735 1600,742'],
  ['u', 14, '1601,754 1599,783 1600,819 1596,886 1593,900'], ['d', 6, '1592,790 1596,866'], ['d', 3, '1609,726 1609,720'], ['u', 2, '1609,733 1609,745'],
  ['m', 24, '1620,800 1622,896'], ['u', 12, '1626,808 1626,829 1622,866'], ['d', 3, '1626,797 1626,791'], ['d', 5, '1618,806 1622,886'], ['u', 2, '1622,893 1622,903'],
  ['m', 12, '1634,848 1636,880'], ['m', 34, '1638,875 1641,975'], ['d', 4, '1634,838 1633,861'], ['d', 7, '1638,883 1641,967'], ['u', 3, '1638,868 1638,874'], ['u', 1, '1641,981 1641,981'],
  ['m', 14, '1650,840 1655,895'], ['d', 3, '1650,822 1652,818'], ['u', 6, '1652,832 1649,870'], ['u', 3, '1656,895 1658,904'], ['d', 4, '1658,849 1662,865 1659,886'],
  ['m', 20, '1664,885 1675,915 1684,940'], ['m', 16, '1676,880 1684,930'], ['u', 6, '1666,910 1684,942'], ['d', 8, '1668,880 1678,880 1676,892 1680,908 1684,926'], ['u', 1, '1684,941 1684,941'],
  ['m', 12, '1695,825 1697,858'], ['d', 3, '1692,828 1697,815'], ['u', 5, '1697,833 1697,863'],
  ['m', 8, '1709,795 1710,826'], ['d', 4, '1709,798 1709,789'], ['u', 4, '1709,804 1710,826'], ['d', 8, '1723,808 1721,824 1717,836 1726,836'], ['m', 5, '1718,838 1722,854'], ['u', 3, '1721,858 1726,849'],
  ['d', 6, '1730,826 1736,813 1742,827 1741,840'], ['u', 1, '1741,854 1741,854'], ['d', 1, '1758,852 1758,852'], ['u', 3, '1758,862 1758,868'], ['d', 1, '1770,865 1770,865'], ['u', 1, '1770,881 1770,881'],
  ['m', 8, '1775,885 1778,922'], ['d', 4, '1775,877 1776,893 1778,911'], ['u', 2, '1778,920 1778,926']
];
for (const [kind, n, path] of arrows) {
  const pts = parse(path);
  for (let i = 0; i < n; i++) {
    let [x, y] = at(pts, n > 1 ? i / (n - 1) : 0);
    const mixed = kind === 'm';
    if (mixed) x += (rnd() - 0.5) * 4;
    const up = kind === 'u' || (mixed && rnd() < 0.5);
    out += `<use href="#${up ? 'upw' : 'dn'}" x="${Math.round(x)}" y="${Math.round(y)}"/>`;
  }
}
// Links between stacked trades, drawn over the arrows
const over = [
  [RED, '1274,560 1275,690', '1292,800 1293,810', 3], [BLUE, '1275,600 1278,740', '1293,800 1293,826', 3], [BLUE, '1586,670 1586,676', '1593,890 1593,894', 2],
  [RED, '1590,700 1592,740', '1594,880 1596,890', 3], [BLUE, '1640,880 1642,900', '1641,960 1642,970', 2], [RED, '1609,722 1611,726', '1624,800 1626,810', 2]
];
out += over.map(link).join('');

// Frame and pointer arrow
out += '<path d="M565.500 1070V196.500H1945.500V1070M565 1069.500H1946" fill="none" stroke="#fff"/>';
out += '<path shape-rendering="auto" d="M779 911L1085 718L1073 694L1180 698L1123 789L1111 766Z" fill="#0099ff"/>';
document.getElementById('canvas').innerHTML = `<g shape-rendering="crispEdges">${out}</g>`;

// Pixelated account name in the title bar
const tones = ['', '#efefef', '#dedede', '#cbcbcb', '#b5b6b5', '#a0a0a0', '#8b8789', '#707070'];
const rows = [
  '32523313121131300023000000000213242211111113120133232242120',
  '23403356544464600042345434340236154243434344156655556454600',
  '63432345655565613143556656553555145334557444145655455440003',
  '00000000000000000000000000000000000000000000023231212110000'
];
let mask = '<path d="M0 7H7V50H0Z" fill="#e4e4e4"/><path d="M13 7H41V14H13Z" fill="#fbf3d2"/><path d="M13 14H41V42H13Z" fill="#ffdf1a"/><path d="M13 21H41V34H13Z" fill="#f5cf00"/><path d="M20 21H34V27H20Z" fill="#dfb100"/>';
rows.forEach((r, j) => [...r].forEach((c, i) => {
  if (c !== '0') mask += `<rect x="${48 + i * 7}" y="${13 + j * 7}" width="7" height="7" fill="${tones[c]}"/>`;
}));
document.getElementById('mask').innerHTML = `<g shape-rendering="crispEdges">${mask}</g>`;
```
